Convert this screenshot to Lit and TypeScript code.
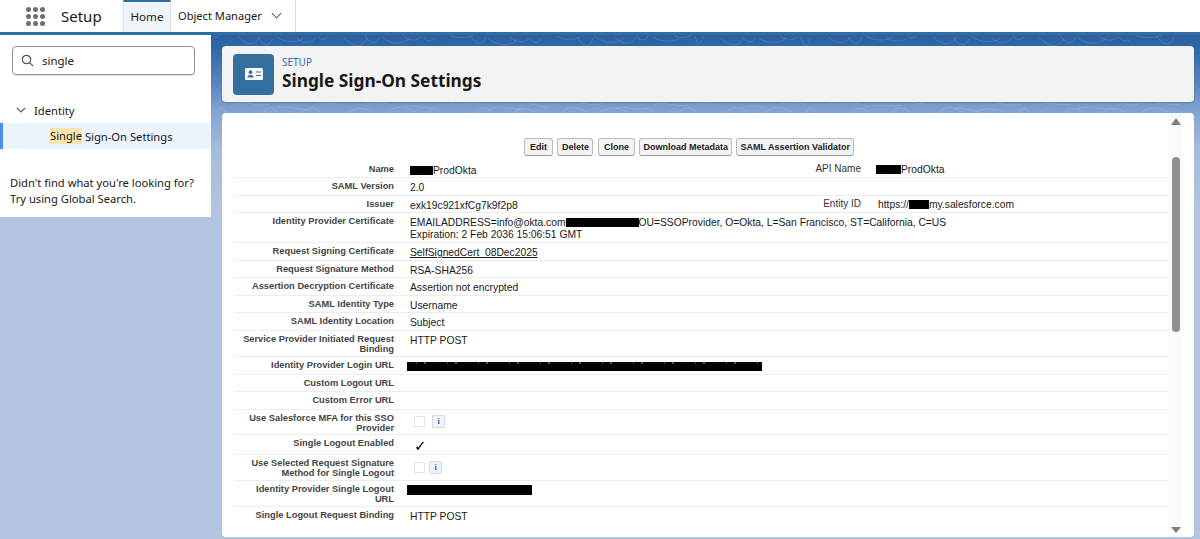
import { LitElement, html, css, nothing } from "lit";
import { customElement } from "lit/decorators.js";

type Row = { label: string; h: string; value?: unknown; label2?: string; value2?: unknown };

const redact = (w: number) => html`<span class="rd" style="width:${w}px"></span>`;

const rows: Row[] = [
  { label: "Name", h: "r18", value: html`${redact(23)}ProdOkta`, label2: "API Name", value2: html`${redact(25)}ProdOkta` },
  { label: "SAML Version", h: "r18", value: "2.0" },
  { label: "Issuer", h: "r18", value: "exk19c921xfCg7k9f2p8", label2: "Entity ID", value2: html`<span class="ind">https://</span>${redact(20)}my.salesforce.com` },
  { label: "Identity Provider Certificate", h: "r30", value: html`EMAILADDRESS=info@okta.com${redact(73)}OU=SSOProvider, O=Okta, L=San Francisco, ST=California, C=US<br />Expiration: 2 Feb 2036 15:06:51 GMT` },
  { label: "Request Signing Certificate", h: "r18", value: html`<u>SelfSignedCert_08Dec2025</u>` },
  { label: "Request Signature Method", h: "r18", value: "RSA-SHA256" },
  { label: "Assertion Decryption Certificate", h: "r18", value: "Assertion not encrypted" },
  { label: "SAML Identity Type", h: "r18", value: "Username" },
  { label: "SAML Identity Location", h: "r18", value: "Subject" },
  { label: "Service Provider Initiated Request Binding", h: "r265", value: "HTTP POST" },
  { label: "Identity Provider Login URL", h: "r18", value: html`<span class="rd long"></span>` },
  { label: "Custom Logout URL", h: "r18" },
  { label: "Custom Error URL", h: "r18" },
  { label: "Use Salesforce MFA for this SSO Provider", h: "r25", value: html`<span class="flag"><span class="chk"></span><span class="info">i</span></span>` },
  { label: "Single Logout Enabled", h: "r20", value: html`<span class="tick">✓</span>` },
  { label: "Use Selected Request Signature Method for Single Logout", h: "r26", value: html`<span class="flag low"><span class="chk"></span><span class="info">i</span></span>` },
  { label: "Identity Provider Single Logout URL", h: "r26", value: html`<span class="rd slo"></span>` },
  { label: "Single Logout Request Binding", h: "r18", value: "HTTP POST" },
];

const buttons = [
  { t: "Edit", c: "w29" },
  { t: "Delete", c: "w36" },
  { t: "Clone", c: "w37" },
  { t: "Download Metadata", c: "" },
  { t: "SAML Assertion Validator", c: "" },
];

// Faint, irregular contour loops in the strips of background around the cards.
const contours = Array.from({ length: 46 }, (_, i) => {
  const a = (i * 37) % 23;
  const b = (i * 53) % 11;
  const x = 212 + i * 21 + (a % 9);
  const w = 8 + a;
  const top = 35 + (b % 4);
  const bottom = 103 + (b % 8);
  const upper = `M${x} ${top}c${w / 4} ${4 + b / 2} ${w * 0.8} ${3 + b} ${w} ${b % 3}`;
  const lower = i % 2
    ? `M${x} ${bottom}c${w / 3} ${-3 - (b % 4)} ${w} ${a % 5} ${w + 9} ${-2 + (a % 4)}`
    : `M${x + 5} 113c${w / 4} ${-6 - (a % 3)} ${w / 1.4} ${-7 + (b % 3)} ${w} -1`;
  return upper + lower;
}).join("");

@customElement("app-root")
export class AppRoot extends LitElement {
  static styles = css`
    :host { display: block; width: 1200px; height: 539px; overflow: hidden; font-family: "Noto Sans", sans-serif; color: #181818; }
    .top { height: 32px; background: #fff; display: flex; align-items: stretch; border-bottom: 3px solid #2f6ea5; }
    .grid { width: 19px; margin: 7px 0 0 26px; display: grid; grid-template-columns: repeat(3, 5px); gap: 2px; align-content: start; }
    .grid i { width: 5px; height: 5px; border-radius: 50%; background: #706e6b; }
    .app { font-size: 15px; margin: 6px 0 0 16px; width: 62px; }
    .tab { display: flex; align-items: center; white-space: nowrap; box-sizing: border-box; }
    .tab.home { font-size: 11.6px; width: 48px; justify-content: center; background: #eef4f8; border-top: 2px solid #2f6ea5; border-left: 1px solid #d8dde6; border-right: 1px solid #d8dde6; padding-bottom: 1px; }
    .tab.obj { font-size: 11.1px; width: 125px; padding: 0 0 1px 7px; gap: 9px; border-right: 1px solid #d8dde6; }
    .body { position: relative; height: 504px; display: flex; background: linear-gradient(#2b619f 0, #2f66a6 12px, #5a86bf 50px, #80a1d0 75px, #a6bcdb 115px, #b2c4e0 175px); }
    .topo { position: absolute; inset: 0; width: 100%; height: 100%; }
    .side { position: relative; width: 211px; height: 182px; background: #fff; flex: none; display: flex; flex-direction: column; font-size: 11.2px; }
    .search { margin: 11px 16px 0 12px; height: 29px; box-sizing: border-box; border: 1px solid #939393; border-radius: 4px; display: flex; align-items: center; gap: 8px; padding: 0 8px; font-size: 11.4px; box-shadow: 0 1px 1px #ddd; }
    .tree { margin-top: 25px; display: flex; align-items: center; gap: 8px; padding-left: 16px; height: 20px; }
    .cur { margin-top: 3px; height: 26px; background: #edf3fc; border-left: 3px solid #4f8ef0; padding-left: 47px; display: flex; align-items: center; white-space: pre; }
    mark { background: #fbe3ad; color: inherit; line-height: 16px; display: inline-block; }
    .hint { margin: 26px 0 0 10px; line-height: 16px; white-space: nowrap; }
    .main { position: relative; flex: 1; padding: 11px 6px 0 11px; display: flex; flex-direction: column; gap: 11px; min-width: 0; }
    .head { height: 56px; background: #f3f3f3; border-radius: 4px; display: flex; align-items: center; gap: 8px; padding-left: 11px; box-shadow: 0 1px 2px rgba(0,0,0,.2); }
    .badge { width: 41px; height: 41px; background: #33709f; border-radius: 4px; display: flex; align-items: center; justify-content: center; }
    .crumb { font-size: 10px; color: #2e6ab5; line-height: 12px; }
    .title { font-size: 17.3px; font-weight: 700; line-height: 24px; margin-top: 1px; }
    .card { height: 424px; background: #fff; border-radius: 4px; display: flex; overflow: hidden; }
    .content { width: 946px; padding-left: 12px; box-sizing: border-box; flex: none; }
    .btns { height: 47.5px; display: flex; justify-content: center; align-items: flex-end; gap: 4.5px; padding: 0 24px 4.5px 0; box-sizing: border-box; }
    button { font: 700 9px "Liberation Sans", sans-serif; color: #222; height: 18px; padding: 0 3px; background: #f3f3f3; border: 1px solid #bbb; border-bottom-color: #999; border-radius: 3px; }
    .w29 { width: 29px; } .w36 { width: 36px; } .w37 { width: 37px; }
    .row { display: grid; grid-template-columns: 160px 16px 351px 100px 15px 292px; width: 934px; box-sizing: border-box; border-bottom: 1px solid #ececec; font-family: "Liberation Sans", sans-serif; }
    .row:last-child { border-bottom: 0; }
    .r18 { height: 17.5px; } .r30 { height: 30px; } .r26 { height: 26px; } .r265 { height: 26.5px; } .r25 { height: 25.5px; } .r20 { height: 20px; }
    .lab { grid-column: 1; font-size: 9.3px; font-weight: 700; color: #444; text-align: right; line-height: 10px; padding: 3px 0 0 8px; }
    .val { grid-column: 3 / -1; font-size: 10.3px; color: #181818; line-height: 12px; padding-top: 4px; white-space: nowrap; }
    .row.two .val { grid-column: 3; }
    .lab2 { grid-column: 4; font-size: 10px; color: #333; text-align: right; line-height: 12px; padding-top: 2px; }
    .val2 { grid-column: 6; font-size: 10.3px; line-height: 12px; padding-top: 3px; white-space: nowrap; }
    .ind { margin-left: 2px; }
    .rd { display: inline-block; height: 9px; background: #000; vertical-align: -1px; }
    .rd.long { display: block; width: 355px; height: 9px; margin: 1px 0 0 -3px; background: linear-gradient(#000, #000) bottom / 100% 7px no-repeat, repeating-linear-gradient(90deg, #000 0 9px, #444 9px 10px, #000 10px 17px, #555 17px 19px, #000 19px 31px); }
    .rd.slo { display: block; width: 125px; height: 10px; margin: 0 0 0 -3px; }
    .flag { display: flex; align-items: flex-start; gap: 7px; margin: 1px 0 0 4px; }
    .flag.low { gap: 4px; margin-top: 2px; }
    .chk { width: 9px; height: 9px; border: 1px solid #e4e4e4; margin-top: 1px; }
    .info { width: 11px; height: 11px; border: 1px solid #d3dae4; border-radius: 2px; background: #eef3fa; color: #1a5fc4; font: 700 8px/11px "Liberation Serif", serif; text-align: center; }
    .tick { font: 700 15px/16px "DejaVu Sans", sans-serif; color: #000; margin-left: 4px; position: relative; top: -1px; }
    .track { width: 15px; background: #fafafa; flex: none; display: flex; flex-direction: column; align-items: center; }
    .up { margin-top: 5px; border: 5px solid transparent; border-top: 0; border-bottom: 7px solid #7d7d7d; }
    .thumb { margin-top: 32px; width: 8px; height: 175px; border-radius: 4px; background: #8f8f8f; }
    .down { margin-top: auto; margin-bottom: 4px; border: 5px solid transparent; border-bottom: 0; border-top: 6px solid #7d7d7d; }
  `;

  render() {
    return html`
      <div class="top">
        <div class="grid">${Array.from({ length: 9 }, () => html`<i></i>`)}</div>
        <div class="app">Setup</div>
        <div class="tab home">Home</div>
        <div class="tab obj">Object Manager
          <svg width="11" height="7" viewBox="0 0 12 7" fill="none" stroke="#555" stroke-width="1.1"><path d="M1 1l5 5 5-5" /></svg>
        </div>
      </div>
      <div class="body">
        <svg class="topo" viewBox="0 35 1200 504" fill="none" stroke="#fff" stroke-opacity=".13">
          <path d=${contours} />
        </svg>
        <div class="side">
          <div class="search">
            <svg width="13" height="13" viewBox="0 0 13 13" fill="none" stroke="#555" stroke-width="1.2"><circle cx="5.5" cy="5.5" r="4.2" /><path d="M8.6 8.6l3.6 3.6" /></svg>
            single
          </div>
          <div class="tree">
            <svg width="10" height="6" viewBox="0 0 10 6" fill="none" stroke="#555" stroke-width="1.1"><path d="M.8.8L5 5 9.2.8" /></svg>
            Identity
          </div>
          <div class="cur"><mark>Single</mark> Sign-On Settings</div>
          <div class="hint">Didn't find what you're looking for?<br />Try using Global Search.</div>
        </div>
        <div class="main">
          <div class="head">
            <div class="badge">
              <svg width="18" height="12" viewBox="0 0 18 12"><rect width="18" height="12" rx="1.5" fill="#fff" /><circle cx="5.5" cy="4.2" r="1.9" fill="#33709f" /><path d="M2.3 9.6c.3-2 1.6-2.8 3.2-2.8s2.9.8 3.2 2.8z" fill="#33709f" /><path d="M11 4h5M11 7.5h5" stroke="#33709f" stroke-width="1.2" /></svg>
            </div>
            <div>
              <div class="crumb">SETUP</div>
              <div class="title">Single Sign-On Settings</div>
            </div>
          </div>
          <div class="card">
            <div class="content">
              <div class="btns">
                ${buttons.map((b) => html`<button class=${b.c}>${b.t}</button>`)}
              </div>
              ${rows.map(
                (r) => html`<div class="row ${r.h} ${r.label2 ? "two" : ""}">
                  <div class="lab">${r.label}</div>
                  <div class="val">${r.value ?? nothing}</div>
                  ${r.label2 ? html`<div class="lab2">${r.label2}</div><div class="val2">${r.value2}</div>` : nothing}
                </div>`
              )}
            </div>
            <div class="track"><div class="up"></div><div class="thumb"></div><div class="down"></div></div>
          </div>
        </div>
      </div>
    `;
  }
}
